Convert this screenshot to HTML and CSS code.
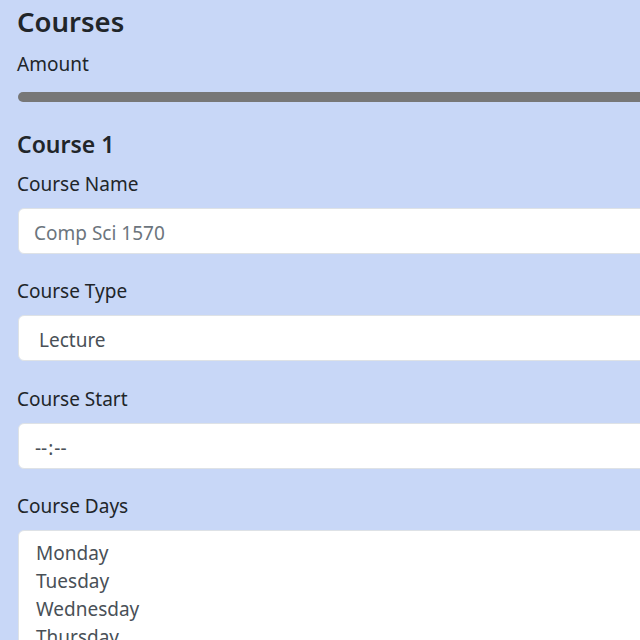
FILE: index.html
```html
<!DOCTYPE html>
<html lang="en">
<head>
  <meta charset="UTF-8" />
  <meta name="viewport" content="width=device-width, initial-scale=1.0"/>
  <title>Courses</title>
  <link rel="stylesheet" href="styles.css">
</head>
<body>

<div class="container">
  <h3>Courses</h3>

  <!-- Amount of courses -->
  <label for="amount">Amount</label>
  <input type="range" id="amount" class="range" min="1" max="8" value="8" />

  <!-- Course 1 -->
  <div class="course">
    <h4>Course 1</h4>

    <div class="field">
      <label for="name1">Course Name</label>
      <input type="text" id="name1" class="control" placeholder="Comp Sci 1570" />
    </div>

    <div class="field">
      <label for="type1">Course Type</label>
      <select id="type1" class="control">
        <option>Lecture</option>
        <option>Lab</option>
        <option>Discussion</option>
      </select>
    </div>

    <div class="field">
      <label for="start1">Course Start</label>
      <input type="time" id="start1" class="control" />
    </div>

    <div class="field">
      <label for="days1">Course Days</label>
      <select id="days1" class="control days" multiple size="7">
        <option>Monday</option>
        <option>Tuesday</option>
        <option>Wednesday</option>
        <option>Thursday</option>
        <option>Friday</option>
        <option>Saturday</option>
        <option>Sunday</option>
      </select>
    </div>
  </div>
</div>

</body>
</html>
```

FILE: styles.css
```css
html, body {
  overflow: hidden;
}
body {
  margin: 0;
  font-family: "Noto Sans", "Open Sans", sans-serif;
  background-color: #c8d7f7;
  color: #212529;
}
.container {
  width: 900px;
  padding: 0 17px;
}
h3 {
  font-size: 27.5px;
  font-weight: 600;
  line-height: 1.2;
  margin: 5px 0 11px;
}
h4 {
  font-size: 23px;
  font-weight: 600;
  line-height: 1.2;
  margin: 0 0 10px;
}
label {
  display: block;
  font-size: 19px;
  line-height: 30px;
  margin-bottom: 9px;
}
.range {
  -webkit-appearance: none;
  appearance: none;
  display: block;
  width: 100%;
  height: 10px;
  margin: 13px 0 29px 1px;
  padding: 0;
  background: transparent;
}
.range::-webkit-slider-runnable-track {
  height: 10px;
  background-color: #777;
  border-radius: 5px;
}
.range::-webkit-slider-thumb {
  -webkit-appearance: none;
  width: 16px;
  height: 16px;
  margin-top: -3px;
  border-radius: 50%;
  background-color: #0d6efd;
}
.field {
  margin-bottom: 22.5px;
}
.control {
  display: block;
  width: 100%;
  height: 46px;
  box-sizing: border-box;
  margin-left: 1px;
  padding: 9px 15px 5px;
  font-family: inherit;
  font-size: 19px;
  line-height: 30px;
  color: #495057;
  background-color: #fff;
  border: 1px solid #dee2e6;
  border-radius: 6px;
}
.control::placeholder {
  color: #6c757d;
}
.control::-webkit-datetime-edit-ampm-field {
  display: none;
}
select.control {
  -webkit-appearance: none;
  appearance: none;
  padding-left: 20px;
}
select.days {
  height: auto;
  padding: 8px 15px;
  line-height: 28px;
}
.days option {
  padding: 1px 2px;
}
```
